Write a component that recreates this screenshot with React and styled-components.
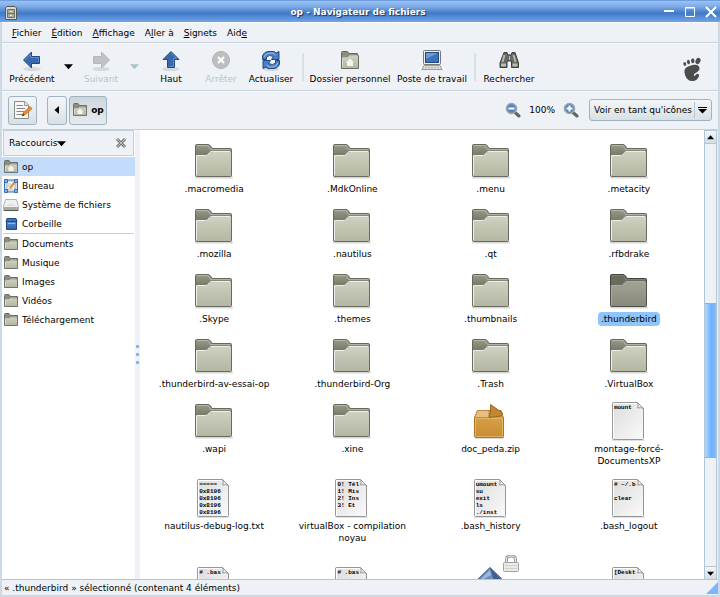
import React from "react";
import styled, { createGlobalStyle, css } from "styled-components";

const Global = createGlobalStyle`
  * { box-sizing: border-box; }
  body { margin: 0; background: #eef2f7; }
  body, button, select {
    font-family: "DejaVu Sans", sans-serif;
    font-size: 9px;
    line-height: 12px;
    color: #000;
  }
  button, select { border: 0; padding: 0; margin: 0; background: none; }
  svg { display: block; flex: none; }
`;

const Window = styled.div`
  display: flex;
  flex-direction: column;
  height: 100vh;
  overflow: hidden;
  background: #eef2f7;
`;

const TitleBar = styled.header`
  display: grid;
  grid-template-columns: 54px 1fr 60px;
  align-items: center;
  flex: none;
  height: 22px;
  padding: 1px 3px 0 5px;
  border-top: 1px solid #6c9ee0;
  background: linear-gradient(#9cc2f3 0, #7eace8 25%, #4179c6 58%, #5088d3 72%, #72a5e6 100%);
`;

const Title = styled.h1`
  margin: 0;
  font-size: 9px;
  line-height: 12px;
  text-align: center;
  color: #fff;
  text-shadow: 1px 1px 1px #16305c;
`;

const WindowButtons = styled.div`
  display: flex;
  justify-content: flex-end;
  gap: 9px;
`;

const Body = styled.div`
  display: flex;
  flex-direction: column;
  flex: 1;
  min-height: 0;
  border: solid #cdd9e4;
  border-width: 0 2px 2px;
`;

const Bar = styled.div`
  display: flex;
  align-items: center;
  flex: none;
  border-bottom: 1px solid #c6d0d8;
  box-shadow: inset 0 1px #fafcfe;
`;

const MenuBar = styled(Bar)`
  height: 21px;
  gap: 10px;
  padding: 1px 0 0 10px;
  u { text-underline-offset: 1px; }
`;

const ToolBar = styled(Bar)`
  height: 48px;
`;

const ToolButton = styled.button`
  display: flex;
  flex-direction: column;
  align-items: center;
  gap: 1px;
  width: ${(p) => p.$w}px;
  white-space: nowrap;
  color: ${(p) => (p.disabled ? "#b4c5cb" : "#000")};
`;

const DropButton = styled.button`
  display: flex;
  justify-content: center;
  width: 12px;
`;

const Divider = styled.div`
  width: 2px;
  height: 28px;
  background: #d9e0e6;
  margin-left: ${(p) => p.$before || 0}px;
`;

const Brand = styled.div`
  margin: 6px 16px 0 auto;
`;

const LocationBar = styled(Bar)`
  height: 39px;
  padding: 0 6px;
  gap: 5px;
`;

const frame = css`
  border: 1px solid #9fb4c0;
  border-radius: 3px;
  background: linear-gradient(#f3f6f8, #d8e0e3);
`;

const PathButton = styled.button`
  ${frame}
  display: flex;
  align-items: center;
  justify-content: center;
  gap: 3px;
  width: ${(p) => p.$w}px;
  height: 29px;
  font-weight: ${(p) => (p.$current ? "bold" : "normal")};
  ${(p) => p.$current && "background: linear-gradient(#ced6dc, #e6ebef);"}
`;

const PathGroup = styled.nav`
  display: flex;
  gap: 2px;
  margin-left: 5px;
`;

const ZoomGroup = styled.div`
  display: flex;
  align-items: center;
  gap: 8px;
  margin-left: auto;
`;

const ViewChoice = styled.label`
  ${frame}
  display: grid;
  grid-template-columns: 1fr 17px;
  align-items: center;
  width: 123px;
  height: 22px;
  margin-left: 5px;
  > select, > svg { grid-row: 1; }
  > select {
    grid-column: 1 / 3;
    height: 20px;
    padding-left: 4px;
    appearance: none;
    border-radius: 0;
  }
  > svg { grid-column: 2; pointer-events: none; }
`;

const Main = styled.div`
  display: flex;
  flex: 1;
  min-height: 0;
`;

const Sidebar = styled.aside`
  flex: none;
  width: 133px;
  background: #fff;
`;

const SideHeader = styled.div`
  display: flex;
  align-items: center;
  justify-content: space-between;
  height: 26px;
  margin: 0 1px 1px;
  padding: 0 6px 0 5px;
  border: 1px solid #bfd0d8;
  background: #eef2f7;
`;

const SideChoice = styled.button`
  display: flex;
  align-items: center;
`;

const PlaceList = styled.ul`
  list-style: none;
  margin: 0;
  padding: 0;
  & + & {
    margin: 0 1px;
    border-top: 1px solid #c0d3da;
  }
  & + & button { padding-left: 0; }
`;

const Place = styled.button`
  display: flex;
  align-items: center;
  gap: 3px;
  width: 100%;
  height: 19px;
  padding-left: 1px;
  background: ${(p) => (p.$active ? "#c3dcfc" : "transparent")};
  white-space: nowrap;
`;

const Splitter = styled.div`
  display: flex;
  flex-direction: column;
  align-items: center;
  justify-content: center;
  gap: 5px;
  flex: none;
  width: 5px;
`;

const Grip = styled.i`
  width: 3px;
  height: 3px;
  border-radius: 1px;
  background: #79b1f5;
`;

const Files = styled.main`
  flex: 1;
  min-width: 0;
  overflow: hidden;
  background: #fff;
`;

const FileGrid = styled.div`
  display: grid;
  grid-template-columns: repeat(4, 1fr);
  gap: 11px 0;
  padding: 11px 6px 0 5px;
`;

const FileButton = styled.button`
  display: flex;
  flex-direction: column;
  align-items: center;
  justify-content: ${(p) => (p.$bare ? "flex-end" : "flex-start")};
  gap: 2px;
`;

const FileLabel = styled.span`
  max-width: 116px;
  margin: ${(p) => (p.$selected ? "-1px 0" : "0")};
  padding: ${(p) => (p.$selected ? "1px 3px" : "0")};
  border-radius: 4px;
  background: ${(p) => (p.$selected ? "#8fc4fd" : "none")};
`;

const Sheet = styled.span`
  display: grid;
  width: 40px;
  height: 40px;
  > * { grid-area: 1 / 1; }
`;

const SheetText = styled.span`
  z-index: 1;
  width: 32px;
  height: 38px;
  padding: 3px 0 0 5px;
  overflow: hidden;
  font: bold 6px/7px "Liberation Mono", monospace;
  text-align: left;
  white-space: pre;
`;

const ScrollBar = styled.div`
  display: flex;
  flex-direction: column;
  flex: none;
  width: 13px;
  margin-right: 1px;
  border: solid #afc6d8;
  border-width: 1px 1px 0;
`;

const ScrollButton = styled.button`
  display: grid;
  place-items: center;
  height: 13px;
  background: linear-gradient(#f4f7f8, #d4dde0);
  border: solid #b4c6cf;
  border-width: ${(p) => (p.$end ? "1px 0 0" : "0 0 1px")};
`;

const Track = styled.div`
  display: grid;
  grid-template-rows: 159fr 155fr 108fr;
  flex: 1;
`;

const Thumb = styled.div`
  grid-row: 2;
  border: 1px solid #7db3ee;
  border-width: 1px 0;
  background: linear-gradient(90deg, #b3d8ff, #6eb0ff 60%, #86befd);
`;

const StatusBar = styled.footer`
  display: flex;
  align-items: center;
  justify-content: space-between;
  flex: none;
  height: 16px;
  padding-left: 2px;
  border-top: 1px solid #b9c4cb;
`;

const Gradients = () => (
  <svg width="0" height="0" aria-hidden="true">
    <defs>
      <linearGradient id="front" x2="0" y2="1"><stop stopColor="#cfd1c2" /><stop offset="1" stopColor="#b3b6a0" /></linearGradient>
      <linearGradient id="frontSel" x2="0" y2="1"><stop stopColor="#a2a397" /><stop offset="1" stopColor="#89897b" /></linearGradient>
      <linearGradient id="back" x2="0" y2="1"><stop stopColor="#9a9c8a" /><stop offset=".4" stopColor="#727464" /></linearGradient>
      <linearGradient id="paper" x2="1" y2="1"><stop stopColor="#dcdcdc" /><stop offset="1" stopColor="#fafafa" /></linearGradient>
      <linearGradient id="box" x2="0" y2="1"><stop stopColor="#dca550" /><stop offset="1" stopColor="#c98d30" /></linearGradient>
      <linearGradient id="blue" x2="0" y2="1"><stop stopColor="#5b91cf" /><stop offset="1" stopColor="#2f62a8" /></linearGradient>
    </defs>
  </svg>
);

const Folder = ({ selected }) => (
  <svg width="40" height="40" viewBox="0 0 40 40">
    <path d="M2 36.500h36" stroke="#000" strokeOpacity=".16" strokeWidth="2" strokeLinecap="round" />
    <path d="M1.500 34V4.500Q1.500 3.500 2.500 3.500H14Q15.500 3.500 16.500 5L18 7.500H36.500Q37.500 7.500 37.500 8.500V34Z" fill={selected ? "#6a6b5e" : "url(#back)"} stroke={selected ? "#44453d" : "#66675d"} />
    <path d="M3 4.500h11l2.500 4h20" fill="none" stroke="#c6c8ba" strokeOpacity={selected ? 0.25 : 0.65} />
    <path d="M1.500 34.500V15.500Q1.500 14.500 2.500 14.500H11Q13 14.500 14 13L15.500 11.500Q16.500 10.500 18 10.500H37.500V34.500Q37.500 35.500 36.500 35.500H2.500Q1.500 35.500 1.500 34.500Z" fill={selected ? "url(#frontSel)" : "url(#front)"} stroke={selected ? "#4e4f47" : "#696a60"} />
    <path d="M2.500 34V14.500H11Q13.500 14.500 14.500 13L15.500 11.500Q16 10.500 18 10.500H36.500" fill="none" stroke={selected ? "#a9aaa0" : "#eeefe8"} />
  </svg>
);

const SmallFolder = ({ home, size = 16 }) => (
  <svg width={size} height={size} viewBox="0 0 16 16">
    <path d="M1.500 13V2.500Q1.500 1.500 2.500 1.500H6L7.500 3.500H14.500V13Z" fill="#8c8e7d" stroke="#6b6c62" />
    <path d="M1.500 6.500H6L7.500 5H14.500V13.500H1.500Z" fill="url(#front)" stroke="#74756a" />
    <path d="M2.500 12.500V6.500H6.500L8 5H13.500" fill="none" stroke="#e2e3d8" strokeOpacity=".7" />
    {home && <path d="M8 6.500L11.500 9.500H10.500V12H5.500V9.500H4.500Z" fill="#f4f5ec" />}
  </svg>
);

const Doc = ({ lines }) => (
  <Sheet>
    <svg width="40" height="40" viewBox="0 0 40 40">
      <path d="M3 39.500h33" stroke="#000" strokeOpacity=".12" />
      <path d="M4.500 1.500H28.500L34.500 7.500V37.500Q34.500 38.500 33.500 38.500H4.500Q3.500 38.500 3.500 37.500V2.500Q3.500 1.500 4.500 1.500Z" fill="url(#paper)" stroke="#979797" />
      <path d="M4.500 37.500V2.500H28" fill="none" stroke="#fff" />
      <path d="M28.500 1.500Q30 5 28.500 7Q32 6 34.500 7.500Z" fill="#eee" stroke="#999" />
    </svg>
    <SheetText>{lines.join("\n")}</SheetText>
  </Sheet>
);

const Package = () => (
  <svg width="40" height="40" viewBox="0 0 40 40">
    <path d="M4 37h29" stroke="#000" strokeOpacity=".15" strokeWidth="2" />
    <path d="M3.500 17L6.500 9.500H30L32.500 17V35.500Q32.500 36.500 31.500 36.500H4.500Q3.500 36.500 3.500 35.500Z" fill="url(#box)" stroke="#af7824" />
    <path d="M3.500 16.500L6.500 9.500H18V16.500Z" fill="#e7bd81" stroke="#bd8b42" />
    <path d="M19.500 10V3.500L31.500 12L30 15L18 16.500Z" fill="#c28735" stroke="#9d6820" />
    <path d="M4.500 35.500V17.500H31.500V35.500Z" fill="none" stroke="#edc278" strokeOpacity=".65" />
  </svg>
);

const LockedVideo = () => (
  <svg width="60" height="51" viewBox="0 0 60 51">
    <path d="M29 12.500L46 29L29 45L12 29Z" fill="#6f8dba" stroke="#3b5688" />
    <path d="M29 13L45 29H34Z" fill="#3f5f97" />
    <path d="M29 15L17 27L30 20Z" fill="#a4b7d6" />
    <path d="M45.500 7V4Q45.500 1 50 1T54.500 4V7" fill="none" stroke="#999" strokeWidth="3" />
    <path d="M45.500 7V4Q45.500 1 50 1T54.500 4V7" fill="none" stroke="#eee" />
    <rect x="42.500" y="7.500" width="15" height="9" rx="1" fill="#e9e9e5" stroke="#a2a29e" />
    <path d="M44 10.500h12M44 13.500h12" stroke="#d0d0cb" />
  </svg>
);

const Arrow = ({ dir, off }) => (
  <svg width="24" height="24" viewBox="0 0 24 24">
    <ellipse cx="12" cy="21" rx="9" ry="2" fill="#000" opacity=".1" />
    <g transform={`rotate(${{ left: 0, up: 90, right: 180 }[dir]} 12 12)`}>
      <path d="M3.500 12L11.500 4V8.500H19.500V15.500H11.500V20Z" fill={off ? "#bfc2c5" : "#3969ad"} stroke={off ? "#b4b7ba" : "#204a87"} strokeLinejoin="round" />
      <path d="M5 12L10.500 6.500V9.500H18.500V14" fill="none" stroke="#7ba4d8" strokeOpacity={off ? 0 : 0.6} />
    </g>
  </svg>
);

const Tri = ({ dir = "down", color = "#000", size = 8 }) => (
  <svg width={size} height={size} viewBox="0 0 8 8">
    <path transform={`rotate(${{ down: 0, left: 90, up: 180 }[dir]} 4 4)`} d="M0 2H8L4 6.500Z" fill={color} />
  </svg>
);

const Stop = () => (
  <svg width="24" height="24" viewBox="0 0 24 24">
    <circle cx="12" cy="12" r="8.500" fill="#bdbec0" stroke="#b1b2b4" />
    <path d="M9 9L15 15M15 9L9 15" stroke="#fff" strokeWidth="2" />
  </svg>
);

const reloadArm = (
  <>
    <path d="M3.500 11.500V8Q5 3.500 10 3.500H14Q16 3.500 17 5L20 3.500V11.500H12.500L14.500 8.500Q10 6 7.500 9V11.500Z" fill="#4b7fc1" stroke="#204a87" strokeLinejoin="round" />
    <path d="M5 9Q6.500 5 11 5H14L16.500 7" fill="none" stroke="#a5c4e8" />
  </>
);

const Reload = () => (
  <svg width="24" height="24" viewBox="0 0 24 24">
    <ellipse cx="12" cy="21" rx="8" ry="2" fill="#000" opacity=".12" />
    <g>{reloadArm}</g>
    <g transform="rotate(180 12 12)">{reloadArm}</g>
  </svg>
);

const HomeFolder = () => (
  <svg width="24" height="24" viewBox="0 0 24 24">
    <path d="M3.500 20V4.500Q3.500 3.500 4.500 3.500H9.500L11 5.500H19.500V20Z" fill="#8c8e7d" stroke="#66675d" />
    <path d="M3.500 9.500H9.500L11 7.500H20.500V20.500H3.500Z" fill="url(#front)" stroke="#696a60" />
    <path d="M4.500 19.500V9.500H10L11.500 7.500H19.500" fill="none" stroke="#e2e3d8" strokeOpacity=".7" />
    <path d="M12 10.500L16 14.500H15V18H9V14.500H8Z" fill="#f4f5ec" />
  </svg>
);

const Computer = () => (
  <svg width="24" height="24" viewBox="0 0 24 24">
    <rect x="3.500" y="2.500" width="17" height="14" rx="1" fill="#eeeeec" stroke="#777974" />
    <rect x="5.500" y="4.500" width="13" height="10" fill="#3f73b5" stroke="#204a87" />
    <path d="M6 5H18L6 11Z" fill="#6d9bd2" />
    <path d="M4 17.500H20L22 21.500H2Z" fill="#deded9" stroke="#999b95" />
    <path d="M5 19.500H19" stroke="#b5b6b1" strokeDasharray="2 1" />
  </svg>
);

const Binoculars = () => (
  <svg width="24" height="24" viewBox="0 0 24 24">
    <path d="M7 4.500H10L11 7H14L15 4.500H18L21.500 15V19.500H14.500V13H10V19.500H3V15Z" fill="#666961" stroke="#3a3c36" />
    <path d="M7.500 7L5.500 14M16.500 7L18.500 14" stroke="#b6b8b2" strokeWidth="2" />
    <path d="M4 15.500H9V18.500H4ZM15.500 15.500H20.500V18.500H15.500Z" fill="#b9bbb4" />
    <path d="M12.500 8V12" stroke="#c0c2bb" />
  </svg>
);

const Foot = () => (
  <svg width="20" height="25" viewBox="0 0 20 25">
    <g fill="#4c4c4c">
      <path d="M9 8.500C13 7 18 8 17.500 12C17 15 13 15.500 12 17.500C11.500 19 13 19.500 14 17.500C15 16 17.500 17 17 19C16 22.500 13 24.500 9.500 24C5 23.500 3 19 2.500 15.500C2 11 5 9.500 9 8.500Z" />
      <ellipse cx="16" cy="4" rx="2.400" ry="3.200" transform="rotate(25 16 4)" />
      <ellipse cx="10.800" cy="3.800" rx="1.700" ry="2.500" />
      <ellipse cx="6.500" cy="5" rx="1.500" ry="2.200" transform="rotate(-10 6.500 5)" />
      <ellipse cx="2.800" cy="7" rx="1.400" ry="1.900" transform="rotate(-20 2.800 7)" />
    </g>
  </svg>
);

const EditLocation = () => (
  <svg width="20" height="22" viewBox="0 0 20 22">
    <path d="M1.500 2.500H12L15.500 6V19.500H1.500Z" fill="#f7f7f5" stroke="#8a8c88" />
    <path d="M11.500 2.500V6.500H15.500" fill="#ddd" stroke="#999" />
    <path d="M3.500 6.500H10M3.500 9.500H12M3.500 12.500H11M3.500 15.500H9" stroke="#888" />
    <path d="M9 17L10.500 13.500L17 7.500L19 9.500L12.500 15.500Z" fill="#f68b1f" stroke="#b5610a" strokeWidth=".7" />
    <path d="M9 17L10 14.500L11.500 16Z" fill="#333" />
  </svg>
);

const Magnifier = ({ plus }) => (
  <svg width="16" height="16" viewBox="0 0 16 16">
    <path d="M10 10.500L14 14" stroke="#62645f" strokeWidth="3" strokeLinecap="round" />
    <circle cx="6.500" cy="6.500" r="5" fill="#4f84c8" stroke="#a3a6a3" strokeWidth="1.600" />
    <path d={plus ? "M3.500 6.500H9.500M6.500 3.500V9.500" : "M3.500 6.500H9.500"} stroke="#fff" strokeWidth="2" />
  </svg>
);

const Desktop = () => (
  <svg width="16" height="16" viewBox="0 0 16 16">
    <rect x="1.500" y="2" width="13" height="12" fill="#d8e4f3" stroke="#3a6db2" />
    <rect x="4" y="3" width="8" height="10" fill="#fafafa" stroke="#8fa0b4" strokeWidth=".8" />
    <path d="M7 10L11.500 4.500" stroke="#f08c1c" strokeWidth="2" />
    <path d="M5 6h3M5 8h2M5 11h5" stroke="#999" strokeWidth=".7" />
    <path d="M1.500 1.500H4.500V4.500H1.500ZM11.500 1.500H14.500V4.500H11.500ZM1.500 11.500H4.500V14.500H1.500ZM11.500 11.500H14.500V14.500H11.500Z" fill="#8bb3e4" stroke="#3a6db2" />
  </svg>
);

const Drive = () => (
  <svg width="16" height="16" viewBox="0 0 16 16">
    <path d="M2.500 2.500H13.500L15.500 9.500V13.500H.5V9.500Z" fill="#f0f0f0" stroke="#b4b4b4" />
    <path d="M1 10H15V13H1Z" fill="#a8aaa8" />
    <path d="M3 9Q8 5 13 9" fill="#ddd" />
    <path d="M1 13.500H15" stroke="#555" />
  </svg>
);

const Trash = () => (
  <svg width="16" height="16" viewBox="0 0 16 16">
    <path d="M3.500 4.500H13.500V13.500H3.500Z" fill="url(#blue)" stroke="#204a87" strokeLinejoin="round" />
    <path d="M4 2.500H13L14 5.500H3Z" fill="#3d73ba" stroke="#204a87" strokeLinejoin="round" />
    <path d="M5 7.500H12" stroke="#8fb8e6" />
  </svg>
);

const AppIcon = () => (
  <svg width="13" height="15" viewBox="0 0 13 15">
    <path d="M.5 14.500V3L2 1.500H10L11.500 3V14.500Z" fill="#d9dbd2" stroke="#55574f" />
    <path d="M2.500 4.500H9.500V12.500H2.500ZM2.500 8.500H9.500" fill="#a9ab9b" stroke="#6f7164" />
    <path d="M5 6.500H7M5 10.500H7" stroke="#eee" />
  </svg>
);

const CaptionGlyph = ({ d, weight }) => (
  <svg width="12" height="12" viewBox="0 0 12 12">
    <path d={d} fill="none" stroke="#fff" strokeWidth={weight} />
  </svg>
);

const menus = [["", "F", "ichier"], ["", "É", "dition"], ["", "A", "ffichage"], ["A", "l", "ler à"], ["", "S", "ignets"], ["Aid", "e", ""]];

const places = [
  ["op", <SmallFolder home />],
  ["Bureau", <Desktop />],
  ["Système de fichiers", <Drive />],
  ["Corbeille", <Trash />],
];
const bookmarks = ["Documents", "Musique", "Images", "Vidéos", "Téléchargement"];

const folders = [
  ".macromedia", ".MdkOnline", ".menu", ".metacity",
  ".mozilla", ".nautilus", ".qt", ".rfbdrake",
  ".Skype", ".themes", ".thumbnails", ".thunderbird",
  ".thunderbird-av-essai-op", ".thunderbird-Org", ".Trash", ".VirtualBox",
  ".wapi", ".xine",
];
const selected = ".thunderbird";

const files = [
  ...folders.map((name) => ({ name, icon: <Folder selected={name === selected} /> })),
  { name: "doc_peda.zip", icon: <Package /> },
  { name: "montage-forcé-DocumentsXP", icon: <Doc lines={["mount"]} /> },
  { name: "nautilus-debug-log.txt", icon: <Doc lines={["=====", "0x8196", "0x8196", "0x8196", "0x8196"]} /> },
  { name: "virtualBox - compilation noyau", icon: <Doc lines={["0! Tél", "1! Mis", "2! Ins", "3! Et"]} /> },
  { name: ".bash_history", icon: <Doc lines={["umount", "su", "exit", "ls", "./inst"]} /> },
  { name: ".bash_logout", icon: <Doc lines={["# ~/.b", "", "clear"]} /> },
  { icon: <Doc lines={["# .bas"]} /> },
  { icon: <Doc lines={["# .bas"]} /> },
  { icon: <LockedVideo /> },
  { icon: <Doc lines={["[Deskt"]} /> },
];

const PlaceItem = ({ name, icon, active }) => (
  <li><Place $active={active}>{icon}{name}</Place></li>
);

export default function App() {
  return (
    <Window>
      <Global />
      <TitleBar>
        <AppIcon />
        <Title>op - Navigateur de fichiers</Title>
        <WindowButtons>
          <button aria-label="Réduire"><CaptionGlyph d="M1 5H11" weight={2} /></button>
          <button aria-label="Agrandir"><CaptionGlyph d="M1.500 1.500H10.500V10.500H1.500ZM1 2H11" weight={1} /></button>
          <button aria-label="Fermer"><CaptionGlyph d="M1 1L11 11M11 1L1 11" weight={2} /></button>
        </WindowButtons>
      </TitleBar>
      <Body>
        <MenuBar as="nav">
          {menus.map(([a, k, b]) => <button key={a + k + b}>{a}<u>{k}</u>{b}</button>)}
        </MenuBar>
        <ToolBar>
          <ToolButton $w={60}><Arrow dir="left" />Précédent</ToolButton>
          <DropButton aria-label="Historique précédent"><Tri size={9} /></DropButton>
          <ToolButton $w={54} disabled><Arrow dir="right" off />Suivant</ToolButton>
          <DropButton aria-label="Historique suivant" disabled><Tri size={9} color="#abc0c9" /></DropButton>
          <ToolButton $w={62}><Arrow dir="up" />Haut</ToolButton>
          <ToolButton $w={38} disabled><Stop />Arrêter</ToolButton>
          <ToolButton $w={62}><Reload />Actualiser</ToolButton>
          <Divider />
          <ToolButton $w={92}><HomeFolder />Dossier personnel</ToolButton>
          <ToolButton $w={72}><Computer />Poste de travail</ToolButton>
          <Divider $before={6} />
          <ToolButton $w={66}><Binoculars />Rechercher</ToolButton>
          <Brand><Foot /></Brand>
        </ToolBar>
        <LocationBar>
          <PathButton $w={29} aria-label="Saisir l'emplacement"><EditLocation /></PathButton>
          <PathGroup>
            <PathButton $w={20} aria-label="Dossiers parents"><Tri dir="left" /></PathButton>
            <PathButton $w={38} $current><SmallFolder home />op</PathButton>
          </PathGroup>
          <ZoomGroup>
            <button aria-label="Zoom arrière"><Magnifier /></button>
            <span>100%</span>
            <button aria-label="Zoom avant"><Magnifier plus /></button>
          </ZoomGroup>
          <ViewChoice>
            <select aria-label="Affichage"><option>Voir en tant qu'icônes</option></select>
            <svg width="17" height="16" viewBox="0 0 17 16">
              <path d="M.5 0V16" stroke="#b7c5cd" />
              <path d="M4 5.500H13" stroke="#000" />
              <path d="M4 7H13L8.500 11.500Z" />
            </svg>
          </ViewChoice>
        </LocationBar>
        <Main>
          <Sidebar>
            <SideHeader>
              <SideChoice>Raccourcis<Tri size={9} /></SideChoice>
              <button aria-label="Fermer le panneau">
                <svg width="12" height="12" viewBox="0 0 12 12">
                  <path d="M2 2L10 10M10 2L2 10" stroke="#777b7c" strokeWidth="3" />
                  <path d="M2 2L10 10M10 2L2 10" stroke="#b9bdbd" />
                </svg>
              </button>
            </SideHeader>
            <PlaceList>
              {places.map(([name, icon]) => <PlaceItem key={name} name={name} icon={icon} active={name === "op"} />)}
            </PlaceList>
            <PlaceList>
              {bookmarks.map((name) => <PlaceItem key={name} name={name} icon={<SmallFolder />} />)}
            </PlaceList>
          </Sidebar>
          <Splitter><Grip /><Grip /><Grip /></Splitter>
          <Files>
            <Gradients />
            <FileGrid>
              {files.map((f, i) => (
                <FileButton key={i} $bare={!f.name}>
                  {f.icon}
                  {f.name && <FileLabel $selected={f.name === selected}>{f.name}</FileLabel>}
                </FileButton>
              ))}
            </FileGrid>
          </Files>
          <ScrollBar>
            <ScrollButton aria-label="Défiler vers le haut"><Tri dir="up" size={7} /></ScrollButton>
            <Track><Thumb /></Track>
            <ScrollButton $end aria-label="Défiler vers le bas"><Tri size={7} /></ScrollButton>
          </ScrollBar>
        </Main>
        <StatusBar>
          <span>« .thunderbird » sélectionné (contenant 4 éléments)</span>
          <svg width="12" height="12" viewBox="0 0 12 12"><path d="M12 0V12H0Z" fill="#7db5fa" /></svg>
        </StatusBar>
      </Body>
    </Window>
  );
}
